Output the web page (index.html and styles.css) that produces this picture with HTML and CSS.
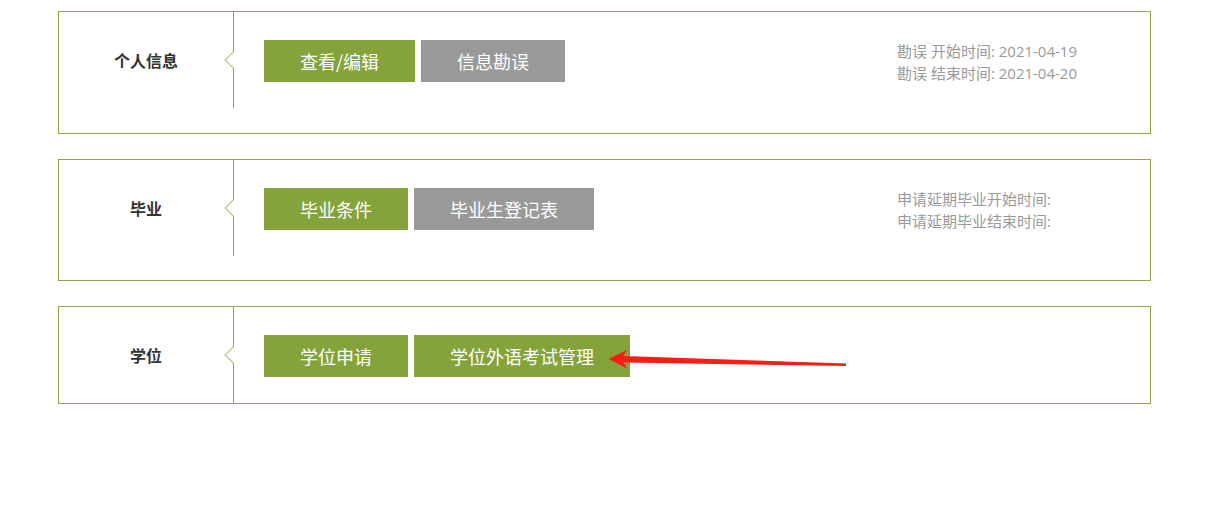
FILE: index.html
```html
<!DOCTYPE html>
<html lang="zh-CN">
<head>
<meta charset="utf-8">
<title>学籍</title>
<link rel="stylesheet" href="styles.css">
</head>
<body>
<div class="page">
  <div class="card">
    <div class="card-title"><span>个人信息</span></div>
    <div class="card-actions">
      <a class="btn btn-green">查看/编辑</a>
      <a class="btn btn-gray">信息勘误</a>
    </div>
    <div class="card-info">
      <p>勘误 开始时间: 2021-04-19</p>
      <p>勘误 结束时间: 2021-04-20</p>
    </div>
  </div>

  <div class="card">
    <div class="card-title"><span>毕业</span></div>
    <div class="card-actions">
      <a class="btn btn-green">毕业条件</a>
      <a class="btn btn-gray">毕业生登记表</a>
    </div>
    <div class="card-info card-info-tight">
      <p>申请延期毕业开始时间:</p>
      <p>申请延期毕业结束时间:</p>
    </div>
  </div>

  <div class="card">
    <div class="card-title"><span>学位</span></div>
    <div class="card-actions">
      <a class="btn btn-green">学位申请</a>
      <a class="btn btn-green">学位外语考试管理</a>
    </div>
  </div>

  <svg class="annot-arrow" width="260" height="30" viewBox="600 345 260 30" xmlns="http://www.w3.org/2000/svg">
    <polygon points="608.5,359 627,350 623.5,356 846,363.5 846,366 623.5,362.5 627,368.5" fill="#fb1c14"/>
  </svg>
</div>
</body>
</html>
```

FILE: styles.css
```css
html, body {
  margin: 0;
  padding: 0;
  background: #ffffff;
}

body {
  font-family: "Noto Sans CJK SC", "Noto Sans", "Liberation Sans", sans-serif;
  color: #333333;
}

.page {
  position: relative;
  padding: 11px 0 0 58px;
}

.card {
  box-sizing: border-box;
  width: 1093px;
  border: 1px solid #8aa845;
  display: flex;
  align-items: flex-start;
  margin-bottom: 25px;
  background: #fff;
}

.card-title {
  position: relative;
  box-sizing: border-box;
  width: 175px;
  height: 96px;
  border-right: 1px solid #8aa845;
  display: flex;
  align-items: center;
  justify-content: center;
  font-size: 16px;
  font-weight: bold;
  color: #333333;
}

.card-title::after {
  content: "";
  position: absolute;
  right: -6px;
  top: 42px;
  width: 11px;
  height: 11px;
  background: #ffffff;
  border-left: 1px solid #a9c070;
  border-bottom: 1px solid #a9c070;
  transform: rotate(45deg);
}

.card-actions {
  flex: 1;
  display: flex;
  gap: 6px;
  padding: 28px 0 0 30px;
}

.btn {
  display: block;
  height: 42px;
  line-height: 42px;
  padding: 0 36px;
  font-size: 18px;
  color: #ffffff;
  text-decoration: none;
  white-space: nowrap;
}

.btn-green {
  background: #84a43b;
}

.btn-gray {
  background: #999999;
}

.card-info {
  width: 253px;
  box-sizing: border-box;
  padding: 28px 0 49px 0;
  font-family: "Open Sans", "Noto Sans CJK SC", sans-serif;
  font-size: 15px;
  color: #999999;
}

.card-info-tight {
  padding-bottom: 48px;
}

.card-info p {
  margin: 0;
  line-height: 22px;
  white-space: nowrap;
}

.annot-arrow {
  position: absolute;
  left: 600px;
  top: 345px;
}
```
